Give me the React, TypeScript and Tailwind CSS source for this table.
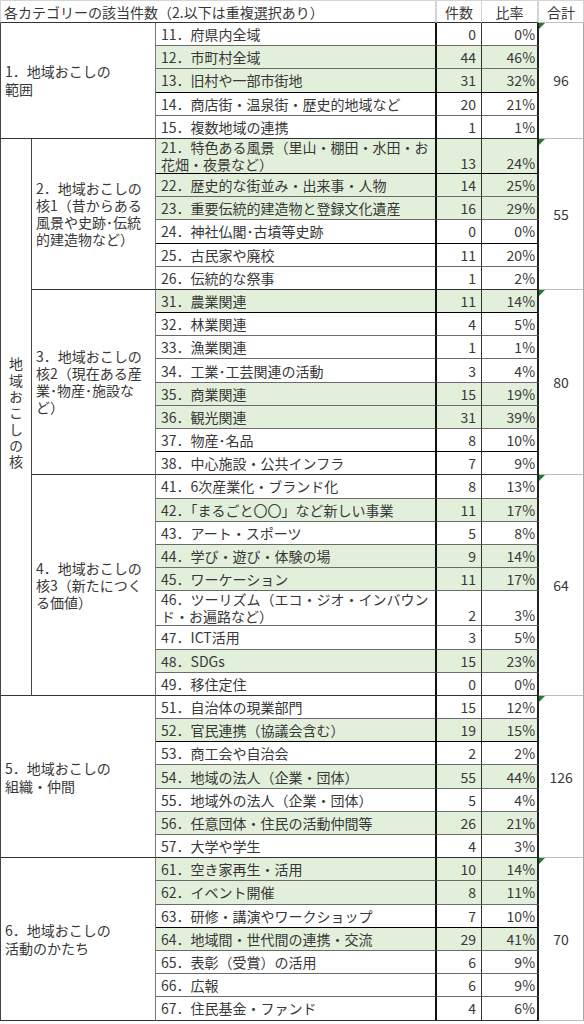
type Row = {
  no: number;
  text: string | string[];
  n: number;
  pct: string;
  g?: boolean;
  dark?: boolean;
};

type Group = { label: string[]; total: number; core?: boolean; rows: Row[] };

const groups: Group[] = [
  {
    label: ["1．地域おこしの", "範囲"],
    total: 96,
    rows: [
      { no: 11, text: "府県内全域", n: 0, pct: "0%" },
      { no: 12, text: "市町村全域", n: 44, pct: "46%", g: true },
      { no: 13, text: "旧村や一部市街地", n: 31, pct: "32%", g: true, dark: true },
      { no: 14, text: "商店街・温泉街・歴史的地域など", n: 20, pct: "21%" },
      { no: 15, text: "複数地域の連携", n: 1, pct: "1%" },
    ],
  },
  {
    label: ["2．地域おこしの", "核1（昔からある", "風景や史跡･伝統", "的建造物など）"],
    total: 55,
    core: true,
    rows: [
      { no: 21, text: ["特色ある風景（里山・棚田・水田・お", "花畑・夜景など）"], n: 13, pct: "24%", g: true, dark: true },
      { no: 22, text: "歴史的な街並み・出来事・人物", n: 14, pct: "25%", g: true },
      { no: 23, text: "重要伝統的建造物と登録文化遺産", n: 16, pct: "29%", g: true },
      { no: 24, text: "神社仏閣･古墳等史跡", n: 0, pct: "0%", dark: true },
      { no: 25, text: "古民家や廃校", n: 11, pct: "20%" },
      { no: 26, text: "伝統的な祭事", n: 1, pct: "2%" },
    ],
  },
  {
    label: ["3．地域おこしの", "核2（現在ある産", "業･物産･施設な", "ど）"],
    total: 80,
    core: true,
    rows: [
      { no: 31, text: "農業関連", n: 11, pct: "14%", g: true, dark: true },
      { no: 32, text: "林業関連", n: 4, pct: "5%" },
      { no: 33, text: "漁業関連", n: 1, pct: "1%" },
      { no: 34, text: "工業･工芸関連の活動", n: 3, pct: "4%" },
      { no: 35, text: "商業関連", n: 15, pct: "19%", g: true },
      { no: 36, text: "観光関連", n: 31, pct: "39%", g: true },
      { no: 37, text: "物産･名品", n: 8, pct: "10%", dark: true },
      { no: 38, text: "中心施設・公共インフラ", n: 7, pct: "9%" },
    ],
  },
  {
    label: ["4．地域おこしの", "核3（新たにつく", "る価値）"],
    total: 64,
    core: true,
    rows: [
      { no: 41, text: "6次産業化・ブランド化", n: 8, pct: "13%" },
      { no: 42, text: "「まるごと〇〇」など新しい事業", n: 11, pct: "17%", g: true },
      { no: 43, text: "アート・スポーツ", n: 5, pct: "8%" },
      { no: 44, text: "学び・遊び・体験の場", n: 9, pct: "14%", g: true },
      { no: 45, text: "ワーケーション", n: 11, pct: "17%", g: true },
      { no: 46, text: ["ツーリズム（エコ・ジオ・インバウン", "ド・お遍路など）"], n: 2, pct: "3%" },
      { no: 47, text: "ICT活用", n: 3, pct: "5%" },
      { no: 48, text: "SDGs", n: 15, pct: "23%", g: true },
      { no: 49, text: "移住定住", n: 0, pct: "0%" },
    ],
  },
  {
    label: ["5．地域おこしの", "組織・仲間"],
    total: 126,
    rows: [
      { no: 51, text: "自治体の現業部門", n: 15, pct: "12%" },
      { no: 52, text: "官民連携（協議会含む）", n: 19, pct: "15%", g: true, dark: true },
      { no: 53, text: "商工会や自治会", n: 2, pct: "2%" },
      { no: 54, text: "地域の法人（企業・団体）", n: 55, pct: "44%", g: true },
      { no: 55, text: "地域外の法人（企業・団体）", n: 5, pct: "4%" },
      { no: 56, text: "任意団体・住民の活動仲間等", n: 26, pct: "21%", g: true },
      { no: 57, text: "大学や学生", n: 4, pct: "3%" },
    ],
  },
  {
    label: ["6．地域おこしの", "活動のかたち"],
    total: 70,
    rows: [
      { no: 61, text: "空き家再生・活用", n: 10, pct: "14%", g: true },
      { no: 62, text: "イベント開催", n: 8, pct: "11%", g: true },
      { no: 63, text: "研修・講演やワークショップ", n: 7, pct: "10%", dark: true },
      { no: 64, text: "地域間・世代間の連携・交流", n: 29, pct: "41%", g: true },
      { no: 65, text: "表彰（受賞）の活用", n: 6, pct: "9%" },
      { no: 66, text: "広報", n: 6, pct: "9%" },
      { no: 67, text: "住民基金・ファンド", n: 4, pct: "6%" },
    ],
  },
];

const coreRows = groups.filter((g) => g.core).reduce((s, g) => s + g.rows.length, 0);

export default function App() {
  let coreDone = false;

  return (
    <div className="w-[584px] bg-white text-[14px] text-[#383838] font-['Noto_Sans_CJK_JP',sans-serif]">
      <table className="table-fixed border-separate border-spacing-0 w-[584px]">
        <colgroup>
          <col className="w-[32px]" />
          <col className="w-[124px]" />
          <col className="w-[281px]" />
          <col className="w-[45px]" />
          <col className="w-[57px]" />
          <col className="w-[45px]" />
        </colgroup>
        <tbody>
          {/* HEADER */}
          <tr className="h-[23px]">
            <td
              colSpan={3}
              className="border-l border-t border-b border-r-2 border-l-[#d4d4d4] border-t-[#d4d4d4] border-b-[#333] border-r-[#d4d4d4] pl-[3px] leading-none whitespace-nowrap"
            >
              各カテゴリーの該当件数（2.以下は重複選択あり）
            </td>
            <td className="border-t border-b border-r border-t-[#d4d4d4] border-b-[#333] border-r-[#d4d4d4] text-center leading-none">
              件数
            </td>
            <td className="border-t border-b border-r-2 border-t-[#d4d4d4] border-b-[#333] border-r-[#d4d4d4] text-center leading-none">
              比率
            </td>
            <td className="border-t border-b border-r border-t-[#d4d4d4] border-b-[#bdbdbd] border-r-[#d4d4d4] text-center leading-none">
              合計
            </td>
          </tr>

          {groups.map((grp) =>
            grp.rows.map((r, i) => {
              const last = i === grp.rows.length - 1;
              const double = Array.isArray(r.text);
              const line = last
                ? "border-b-[#333]"
                : r.dark
                  ? "border-b-black"
                  : "border-b-[#6b6b6b]";
              const fill = r.g ? "bg-[#e2efda]" : "bg-white";
              const showCore = grp.core && i === 0 && !coreDone;
              if (showCore) coreDone = true;

              return (
                <tr key={r.no} className={double ? "h-[35px]" : "h-[23.2px]"}>
                  {/* LEFT LABELS */}
                  {showCore && (
                    <td
                      rowSpan={coreRows}
                      className="border-l border-r border-b border-l-[#444] border-r-[#444] border-b-[#333] align-middle text-center"
                    >
                      <span className="inline-block [writing-mode:vertical-rl] tracking-[2.3px] leading-none">
                        地域おこしの核
                      </span>
                    </td>
                  )}
                  {i === 0 && grp.core && (
                    <td
                      rowSpan={grp.rows.length}
                      className="border-r border-b border-r-[#777] border-b-[#333] pl-[4px] align-middle leading-[17px]"
                    >
                      {grp.label.map((l, k) => (
                        <div key={k} className="whitespace-nowrap">
                          {l}
                        </div>
                      ))}
                    </td>
                  )}
                  {i === 0 && !grp.core && (
                    <td
                      colSpan={2}
                      rowSpan={grp.rows.length}
                      className="border-l border-r border-b border-l-[#444] border-r-[#777] border-b-[#333] pl-[4px] align-middle leading-[18px]"
                    >
                      {grp.label.map((l, k) => (
                        <div key={k} className="whitespace-nowrap">
                          {l}
                        </div>
                      ))}
                    </td>
                  )}

                  {/* ITEM */}
                  <td
                    className={`border-b border-r-2 border-r-[#111] ${line} ${fill} pl-[5px] whitespace-nowrap ${
                      double ? "align-top leading-[17px]" : "align-middle leading-none"
                    }`}
                  >
                    {double ? (
                      <>
                        <div>
                          {r.no}．{(r.text as string[])[0]}
                        </div>
                        <div>{(r.text as string[])[1]}</div>
                      </>
                    ) : (
                      <>
                        {r.no}．{r.text as string}
                      </>
                    )}
                  </td>

                  {/* COUNT / RATIO */}
                  <td
                    className={`border-b border-r border-r-[#333] ${line} ${fill} text-right pr-[5px] leading-none ${
                      double ? "align-bottom pb-[3px]" : "align-middle"
                    }`}
                  >
                    {r.n}
                  </td>
                  <td
                    className={`border-b border-r-2 border-r-[#222] ${line} ${fill} text-right pr-[2px] leading-none ${
                      double ? "align-bottom pb-[3px]" : "align-middle"
                    }`}
                  >
                    {r.pct}
                  </td>

                  {/* TOTAL */}
                  {i === 0 && (
                    <td
                      rowSpan={grp.rows.length}
                      className="relative border-r border-b border-r-[#a6a6a6] border-b-[#bdbdbd] bg-white text-center align-middle leading-none"
                    >
                      <span className="absolute left-0 top-0 w-0 h-0 border-t-[6px] border-r-[6px] border-t-[#1e7b30] border-r-transparent" />
                      {grp.total}
                    </td>
                  )}
                </tr>
              );
            })
          )}
        </tbody>
      </table>
    </div>
  );
}
